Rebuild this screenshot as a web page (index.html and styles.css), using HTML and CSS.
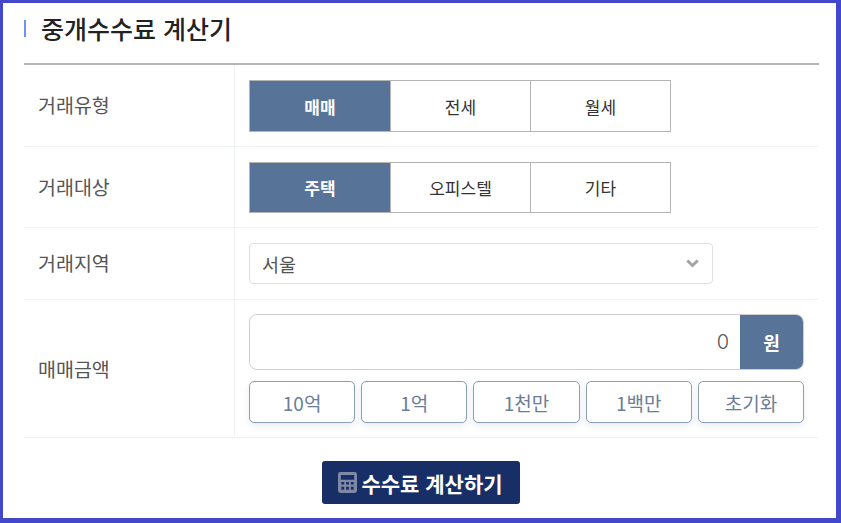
FILE: index.html
```html
<!DOCTYPE html>
<html lang="ko">
<head>
<meta charset="utf-8">
<title>중개수수료 계산기</title>
<link rel="stylesheet" href="styles.css">
</head>
<body>
<main class="frame">
  <h1 class="title"><span class="title-mark"></span>중개수수료 계산기</h1>
  <section class="form">
    <div class="row row-a">
      <div class="label">거래유형</div>
      <div class="field">
        <div class="segments">
          <button class="seg seg-on">매매</button><button class="seg">전세</button><button class="seg">월세</button>
        </div>
      </div>
    </div>
    <div class="row row-b">
      <div class="label">거래대상</div>
      <div class="field">
        <div class="segments">
          <button class="seg seg-on">주택</button><button class="seg">오피스텔</button><button class="seg">기타</button>
        </div>
      </div>
    </div>
    <div class="row row-c">
      <div class="label">거래지역</div>
      <div class="field">
        <div class="select">
          <span>서울</span>
          <svg class="chev" viewBox="0 0 13 9" width="13" height="9"><path d="M1.300 1.500 6.500 6.500 11.700 1.500" fill="none" stroke="#a3a3a3" stroke-width="3"/></svg>
        </div>
      </div>
    </div>
    <div class="row row-d">
      <div class="label">매매금액</div>
      <div class="field field-col">
        <div class="amount">
          <span class="amount-val">0</span>
          <span class="amount-unit">원</span>
        </div>
        <div class="quick">
          <button class="q">10억</button>
          <button class="q">1억</button>
          <button class="q">1천만</button>
          <button class="q">1백만</button>
          <button class="q">초기화</button>
        </div>
      </div>
    </div>
  </section>
  <div class="actions">
    <button class="calc">
      <svg class="calc-ico" viewBox="0 0 20 22" width="19" height="21"><path fill="#7f89a3" fill-rule="evenodd" d="M2.500 0h15A2.500 2.500 0 0 1 20 2.500v17a2.500 2.500 0 0 1-2.500 2.500h-15A2.500 2.500 0 0 1 0 19.500v-17A2.500 2.500 0 0 1 2.500 0zM3 3v5h14V3zM3.500 10.500v2.500h3v-2.500zM8.500 10.500v2.500h3v-2.500zM13.500 10.500v2.500h3v-2.500zM3.500 15.500v3h3v-3zM8.500 15.500v3h3v-3zM13.500 15.500v3h3v-3z"/></svg>
      <span>수수료 계산하기</span>
    </button>
  </div>
</main>
</body>
</html>
```
FILE: styles.css
```css
* { box-sizing: border-box; }
html, body { margin: 0; height: 100%; }
body {
  width: 841px;
  height: 523px;
  overflow: hidden;
  border-style: solid;
  border-color: #4347cc;
  border-width: 3px 5px 5px 3px;
  background: #fff;
  font-family: "Noto Sans CJK KR", "Noto Sans", sans-serif;
  color: #333;
}
.frame { padding: 0 17px 0 21px; }
.title {
  display: flex;
  align-items: center;
  height: 62px;
  margin: 0;
  padding-bottom: 10px;
  font-size: 25px;
  font-weight: 500;
  color: #222;
  border-bottom: 2px solid #b5b5b5;
}
.title-mark {
  width: 2px;
  height: 17px;
  margin-right: 15px;
  background: #6d94f0;
}
.row {
  display: grid;
  grid-template-columns: 211px 1fr;
  border-bottom: 1px solid #eef1f6;
}
.row-a { height: 82px; }
.row-b { height: 81px; }
.row-c { height: 72px; }
.row-d { height: 138px; }
.label {
  display: flex;
  align-items: center;
  padding: 0 0 2px 14px;
  font-size: 19.500px;
  color: #555;
  border-right: 1px solid #eef1f6;
}
.row-d .label { padding-bottom: 0; }
.field {
  padding: 15px 15px 0 14px;
}
.segments { display: flex; height: 52px; }
.row-b .segments { height: 51px; }
.seg {
  flex: 0 0 141px;
  margin: 0 0 0 -1px;
  border: 1px solid #b4b4b4;
  background: #fff;
  font: inherit;
  font-size: 17px;
  color: #333;
  padding: 0;
}
.seg:first-child { flex-basis: 142px; margin-left: 0; }
.seg-on {
  background: #587398;
  color: #fff;
  font-weight: 700;
  font-size: 17px;
}
.select {
  display: flex;
  align-items: center;
  justify-content: space-between;
  width: 464px;
  height: 41px;
  padding: 0 13px 0 12px;
  border: 1px solid #e0e0e0;
  border-radius: 4px;
  font-size: 18.500px;
  color: #555;
}
.field-col { display: flex; flex-direction: column; gap: 11px; padding-top: 14px; }
.amount {
  display: flex;
  height: 56px;
  border: 1px solid #cfcfcf;
  border-radius: 8px;
  overflow: hidden;
}
.amount-val {
  flex: 1;
  align-self: center;
  text-align: right;
  padding-right: 11px;
  font-family: "Inter", sans-serif;
  font-weight: 300;
  font-size: 20px;
  color: #555;
}
.amount-unit {
  flex: 0 0 63px;
  display: flex;
  align-items: center;
  justify-content: center;
  background: #587398;
  color: #fff;
  font-weight: 700;
  font-size: 18px;
}
.quick { display: flex; gap: 6px; }
.q {
  flex: 1;
  height: 42px;
  padding: 0;
  border: 1px solid #8aa0bd;
  border-radius: 5px;
  background: #fff;
  box-shadow: 0 3px 6px rgba(90, 110, 150, 0.12);
  font: inherit;
  font-size: 19px;
  color: #6b7d97;
}
.actions { display: flex; justify-content: center; padding: 23px 2px 0 0; }
.calc {
  display: flex;
  align-items: center;
  justify-content: center;
  gap: 4px;
  width: 198px;
  height: 43px;
  padding: 0;
  border: 0;
  border-radius: 3px;
  background: #172f66;
  color: #fff;
  font: inherit;
  font-size: 21px;
  font-weight: 700;
}
.calc-ico { flex: none; }
```
